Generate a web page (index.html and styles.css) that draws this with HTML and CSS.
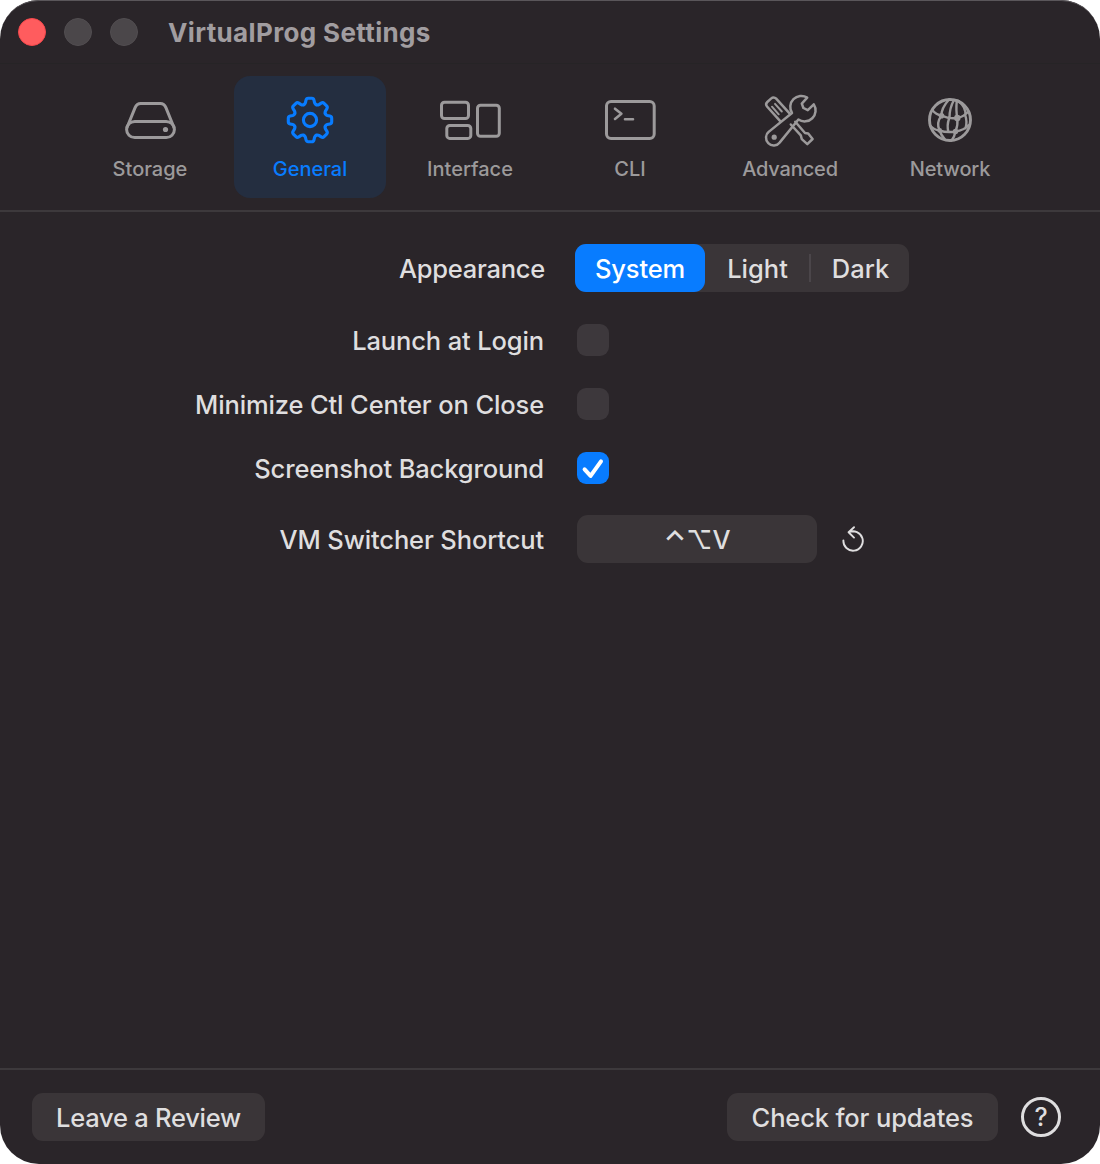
FILE: index.html
```html
<!DOCTYPE html>
<html lang="en">
<head>
<meta charset="utf-8">
<title>VirtualProg Settings</title>
<link rel="stylesheet" href="styles.css">
</head>
<body>
<div class="window">
  <header class="titlebar">
    <div class="lights"><span class="light close"></span><span class="light"></span><span class="light"></span></div>
    <h1 class="title">VirtualProg Settings</h1>
  </header>
  <nav class="tabs">
    <button class="tab">
      <svg class="icon" viewBox="-32 -28 64 56" stroke-width="3"><rect x="-23.4" y="1.4" width="47.8" height="16.2" rx="8.1"/><path d="M-23 7.5 L-14.8 -12.6 Q-13.2 -16.5 -9.3 -16.5 H10.3 Q14.2 -16.5 15.8 -12.6 L24 7.5"/><circle class="solid" cx="15.5" cy="9.5" r="2.6"/></svg>
      <span class="name storage">Storage</span>
    </button>
    <button class="tab active">
      <svg class="icon" viewBox="-32 -28 64 56" stroke-width="3.1">
        <defs><path id="tooth" d="M-6.31 -15.24 Q-5 -15.8 -4.6 -17.2 L-4 -19.8 Q-3.6 -21.7 -1.8 -21.7 H1.8 Q3.6 -21.7 4 -19.8 L4.6 -17.2 Q5 -15.8 6.31 -15.24"/></defs>
        <use href="#tooth"/><use href="#tooth" transform="rotate(45)"/><use href="#tooth" transform="rotate(90)"/><use href="#tooth" transform="rotate(135)"/><use href="#tooth" transform="rotate(180)"/><use href="#tooth" transform="rotate(225)"/><use href="#tooth" transform="rotate(270)"/><use href="#tooth" transform="rotate(315)"/>
        <circle r="6.6"/>
      </svg>
      <span class="name general">General</span>
    </button>
    <button class="tab">
      <svg class="icon" viewBox="-32 -28 64 56" stroke-width="3"><rect x="-28.5" y="-17.8" width="27" height="16.3" rx="3"/><rect x="-23.2" y="5.4" width="24" height="13" rx="3"/><rect x="7.5" y="-14.8" width="21.8" height="31" rx="3"/></svg>
      <span class="name interface">Interface</span>
    </button>
    <button class="tab">
      <svg class="icon" viewBox="-32 -28 64 56" stroke-width="3"><rect x="-23.5" y="-18.5" width="47.7" height="37" rx="4.5"/><path stroke-width="2.6" d="M-15 -11.3 L-8.6 -6.2 L-15 -1.1 M-5 -.7 H3"/></svg>
      <span class="name cli">CLI</span>
    </button>
    <button class="tab">
      <svg class="icon" viewBox="-32 -28 64 56" stroke-width="2.5"><path d="M-.7 -6.8 L-13.6 -21.2 Q-16.3 -23.6 -19 -21.4 L-22.7 -18 Q-24.9 -15.9 -23 -13.5 L-9.8 1.2"/><path stroke-width="2" d="M-18 -13.3 L-11.3 -5.7 M-15 -16.1 L-8.2 -8.5"/><path d="M.8 4.5 L10.8 15.4 L11.8 19.2 L17.3 24.2 L22.6 19 L18.2 13.5 L15 13 L5.3 1.8"/><path d="M2 -7 L-21 11.6 A7.7 7.7 0 1 0 -10.2 22.4 L8.4 -.5 A11 11 0 0 0 23.8 -15.6 L17.8 -9.8 L13.4 -12 L11.8 -16.4 L17.2 -22.4 A11.1 11.1 0 0 0 2 -7 Z"/><circle class="solid" cx="-15.8" cy="17.2" r="2.6"/></svg>
      <span class="name advanced">Advanced</span>
    </button>
    <button class="tab">
      <svg class="icon" viewBox="-32 -28 64 56" stroke-width="2.4"><circle r="20.5" stroke-width="2.9"/><path d="M-1 -20.5 Q-9 -11.5 -8.5 -4.3 Q-14 2.5 -10.5 10.5 Q-9 15 -5 19.5 M4 -20 Q-.5 -12 -.5 -2.5 M6.8 -19.5 Q5.8 -9 7.3 -2 Q8.2 5 5.5 11.5 Q4.5 17 1.5 20.5 M-17.8 -10 Q-14 -5.5 -8.5 -4.3 Q-.5 -.8 7.3 -2 Q13 -2.8 18.5 -8.5 M-20 5.5 Q-16 10 -10.5 10.5 Q-3 13 5.5 11.5 Q14 10.5 19.5 4.5 M8.5 -19 Q16.5 -12.5 15.2 -4.8 Q17.5 2 15.5 8.2 M-.8 -2 Q-3.5 6 -1.5 12"/><circle class="solid" cx="-8.5" cy="-4.2" r="2.8"/><circle class="solid" cx="7.3" cy="-2" r="3.2"/><circle class="solid" cx="-10.3" cy="10.4" r="2.3"/><circle class="solid" cx="5.5" cy="11.5" r="2.7"/></svg>
      <span class="name network">Network</span>
    </button>
  </nav>
  <main class="form">
    <div class="row row-tall">
      <span class="label">Appearance</span>
      <div class="segments"><button class="segment selected">System</button><button class="segment light-mode">Light</button><button class="segment dark-mode">Dark</button></div>
    </div>
    <div class="row"><span class="label">Launch at Login</span><span class="check"></span></div>
    <div class="row"><span class="label">Minimize Ctl Center on Close</span><span class="check"></span></div>
    <div class="row"><span class="label">Screenshot Background</span><span class="check checked"><svg viewBox="0 0 32 32"><path d="M7.6 17.3 L13.6 23.9 L24 9.3"/></svg></span></div>
    <div class="row row-shortcut"><span class="label">VM Switcher Shortcut</span>
      <button class="shortcut"><span class="key-ctrl">⌃</span><span>⌥</span><span>V</span></button>
      <svg class="reset" viewBox="-15 -15 30 30"><path d="M-9.6 -.6 A9.7 9.7 0 1 0 -4.2 -8.7 Q-1 -10 2 -9.5 M1 -13.8 L-4.4 -8.7 L1 -3.4"/></svg>
    </div>
  </main>
  <footer class="footer">
    <button class="push review">Leave a Review</button>
    <button class="push updates">Check for updates</button>
    <button class="help">?</button>
  </footer>
</div>
</body>
</html>
```
FILE: styles.css
```css
* { box-sizing: border-box; }
body { margin: 0; background: #fff; font-family: Inter, "Liberation Sans", sans-serif; }
button { border: 0; padding: 0; margin: 0; background: none; font: inherit; color: inherit; letter-spacing: inherit; }
.window { width: 1100px; height: 1164px; display: flex; flex-direction: column; overflow: hidden; border-radius: 39px; background: #2a2529; color: #dfdedf; box-shadow: inset 0 2px 0 -1px #5a565a; }
.titlebar { display: flex; align-items: center; height: 64px; padding-left: 18px; border-bottom: 1px solid #262426; }
.lights { display: flex; gap: 18px; }
.light { width: 28px; height: 28px; border-radius: 50%; background: #4b474a; border: 1px solid #524e51; }
.light.close { background: #ff5c5e; border-color: #f5484c; }
.title { margin: 2px 0 0 30px; font-size: 26px; line-height: 32px; font-weight: 700; letter-spacing: .36px; color: #a19da0; white-space: nowrap; }
.tabs { display: flex; justify-content: center; gap: 8px; height: 148px; padding-top: 12px; border-bottom: 2px solid #3d393c; }
.tab { display: flex; flex-direction: column; align-items: center; width: 152px; height: 122px; padding-top: 16px; border-radius: 16px; color: #9c9a9b; }
.tab.active { color: #087cff; background: #242e40; }
.icon { width: 64px; height: 56px; fill: none; stroke: currentColor; stroke-linecap: round; stroke-linejoin: round; }
.icon .solid { fill: currentColor; stroke: none; }
.name { margin-top: 8px; font-size: 20px; line-height: 26px; font-weight: 500; white-space: nowrap; }
.advanced, .network { letter-spacing: -.15px; }
.form { flex: 1; display: flex; flex-direction: column; padding-top: 32px; font-weight: 450; }
.row { display: flex; align-items: center; height: 64px; }
.row-tall { height: 48px; margin-bottom: 16px; }
.row-shortcut { height: 48px; margin-top: 15px; }
.label { width: 545px; margin-right: 32px; padding: 2px 1px 0 0; font-size: 25.5px; line-height: 32px; letter-spacing: -.13px; text-align: right; white-space: nowrap; }
.row-tall .label { margin-right: 30px; padding-right: 0; letter-spacing: -.25px; }
.segments { display: flex; width: 334px; height: 48px; border-radius: 11px; background: #3a3538; }
.segment { position: relative; width: 105px; font-size: 25.5px; white-space: nowrap; }
.segment.selected { width: 130px; border-radius: 11px; background: #087cff; color: #fff; font-weight: 500; letter-spacing: -.15px; }
.segment.dark-mode { width: 99px; padding-left: 2px; }
.dark-mode::before { content: ""; position: absolute; left: -1px; top: 10px; width: 2px; height: 28px; background: #4b464a; }
.check { width: 32px; height: 32px; border-radius: 9px; background: #3d383c; }
.check.checked { background: #087cff; }
.check svg { display: block; width: 32px; height: 32px; fill: none; stroke: #fff; stroke-width: 4; stroke-linecap: round; stroke-linejoin: round; }
.shortcut { display: flex; justify-content: center; align-items: center; width: 240px; height: 48px; border-radius: 11px; background: #3a3538; font-size: 25.5px; font-weight: 500; }
.key-ctrl { font-size: 29px; line-height: 32px; padding-top: 4px; }
.reset { width: 30px; height: 30px; margin: 3px 0 0 21px; fill: none; stroke: #dfdedf; stroke-width: 1.9; stroke-linecap: round; stroke-linejoin: round; }
.footer { display: flex; align-items: center; height: 96px; padding: 0 39px 0 32px; border-top: 2px solid #3d393c; font-weight: 450; }
.push { height: 48px; border-radius: 11px; background: #3a3538; font-size: 25.5px; letter-spacing: -.15px; white-space: nowrap; }
.review { width: 233px; letter-spacing: -.25px; }
.updates { width: 271px; margin-left: auto; }
.help { width: 40px; height: 40px; margin-left: 23px; border: 3px solid #dfdedf; border-radius: 50%; font-size: 25px; line-height: 34px; font-weight: 500; }
```
